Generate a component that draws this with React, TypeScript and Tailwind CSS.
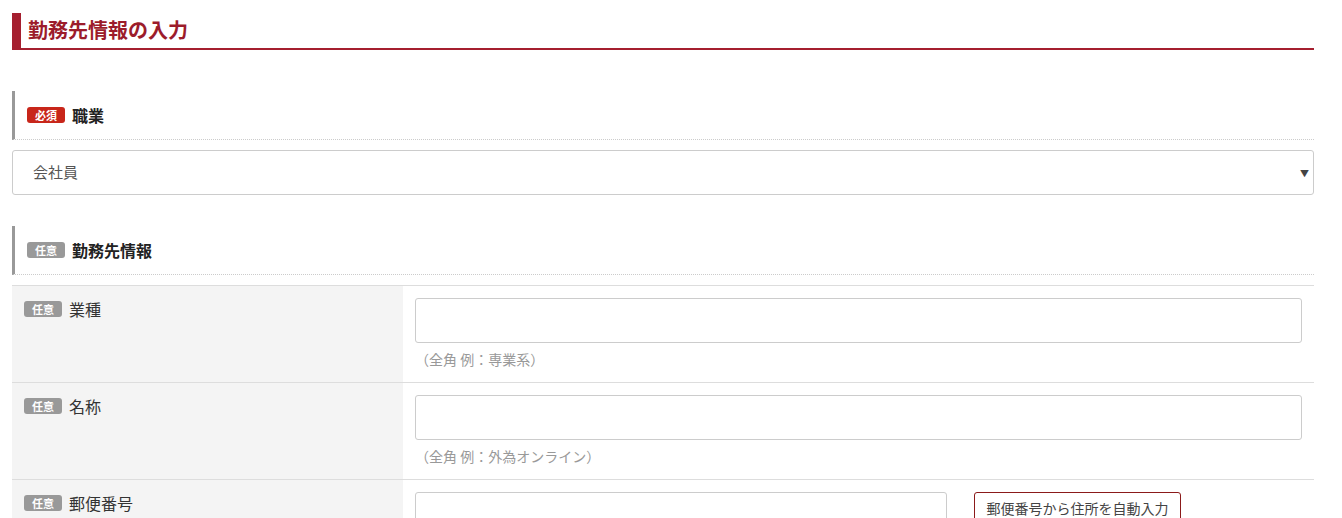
import React from "react";

const font = { fontFamily: '"Noto Sans CJK JP", "Noto Sans", sans-serif' };

function Badge({ required }: { required?: boolean }) {
  return (
    <span
      className={`inline-flex h-[16px] w-[38px] items-center justify-center rounded-[3px] text-[11px] font-bold leading-none text-white ${
        required ? "bg-[#c8261a]" : "bg-[#999999]"
      }`}
    >
      {required ? "必須" : "任意"}
    </span>
  );
}

function SectionHeader({ required, title }: { required?: boolean; title: string }) {
  return (
    <div className="flex h-[49px] items-center gap-[7px] border-b border-l-[3px] border-b-[#cccccc] border-l-[#999999] pl-[12px] [border-bottom-style:dotted]">
      <Badge required={required} />
      <span className="text-[16px] font-bold text-[#222222]">{title}</span>
    </div>
  );
}

function Row({
  label,
  hint,
  children,
}: {
  label: string;
  hint?: string;
  children: React.ReactNode;
}) {
  return (
    <div className="flex border-b border-[#dddddd]">
      <div className="w-[391px] bg-[#f4f4f4] pl-[12px] pt-[14px]">
        <div className="flex items-center gap-[7px]">
          <Badge />
          <span className="text-[16px] leading-[18px] text-[#333333]">{label}</span>
        </div>
      </div>
      <div className="flex-1 px-[12px] pt-[12px] pb-[13px]">
        {children}
        {hint && <p className="mt-[6px] text-[14px] leading-[20px] text-[#999999]">{hint}</p>}
      </div>
    </div>
  );
}

export default function App() {
  return (
    <div className="min-h-screen bg-white" style={font}>
      <div className="ml-[12px] w-[1302px] pt-[13px]">
        <h2 className="flex h-[37px] items-center border-b-2 border-l-[9px] border-[#a51f2f] pl-[7px] pb-[2px] text-[20px] font-bold text-[#9c1c2b]">
          勤務先情報の入力
        </h2>

        <div className="mt-[41px]">
          <SectionHeader required title="職業" />
        </div>

        <div className="relative mt-[10px] flex h-[45px] items-center rounded-[3px] border border-[#cccccc] pl-[20px] text-[15px] text-[#555555]">
          会社員
          <span className="absolute right-[4px] top-[16px] text-[9px] text-[#444444]">▼</span>
        </div>

        <div className="mt-[31px]">
          <SectionHeader title="勤務先情報" />
        </div>

        <div className="mt-[10px] border-t border-[#dddddd]">
          <Row label="業種" hint="（全角 例：専業系）">
            <div className="h-[45px] rounded-[3px] border border-[#cccccc]" />
          </Row>
          <Row label="名称" hint="（全角 例：外為オンライン）">
            <div className="h-[45px] rounded-[3px] border border-[#cccccc]" />
          </Row>
          <Row label="郵便番号">
            <div className="flex items-start gap-[27px]">
              <div className="h-[45px] w-[532px] rounded-[3px] border border-[#cccccc]" />
              <button className="h-[32px] w-[207px] rounded-[3px] border border-[#8b1a1a] bg-white text-[14px] text-[#444444]">
                郵便番号から住所を自動入力
              </button>
            </div>
          </Row>
        </div>
      </div>
    </div>
  );
}
